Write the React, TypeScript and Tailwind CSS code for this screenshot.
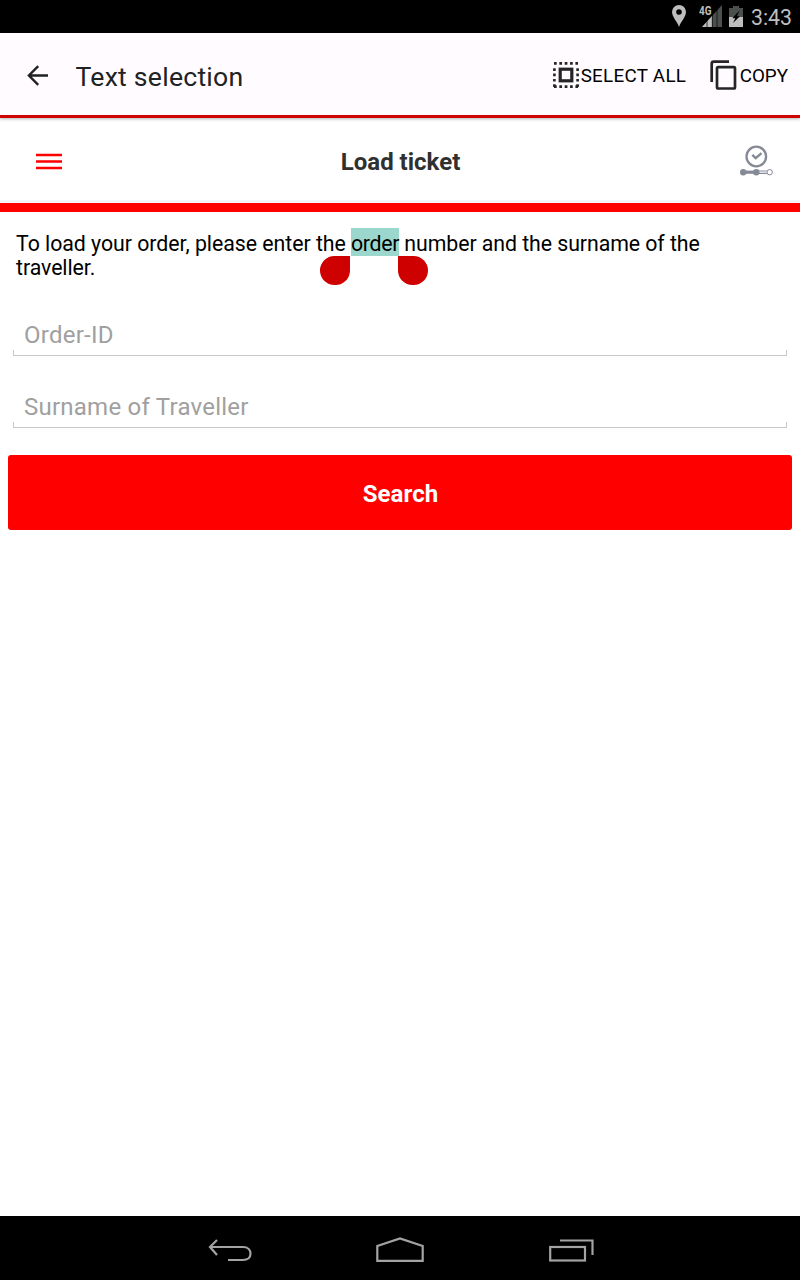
import React from "react";

function StatusBar() {
  return (
    <header className="flex h-[33px] items-center justify-end bg-black pr-2 text-[#bebebe]">
      <svg className="mb-[2px] mr-[13px] h-[22px] w-[14px]" viewBox="0 0 14 22" fill="currentColor">
        <path fillRule="evenodd" d="M7 0a7 7 0 0 0-7 7c0 5 5 9 7 15 2-6 7-10 7-15a7 7 0 0 0-7-7Zm0 4.2a2.8 2.8 0 1 1 0 5.6 2.8 2.8 0 0 1 0-5.6Z" />
      </svg>
      <svg className="mb-[2px] mr-[7px] h-[22px] w-[23px]" viewBox="0 0 23 22">
        <path d="M3 22 23 0v22Z" fill="#4b504d" />
        <path d="M3 22 13 11v11Z" fill="#bebebe" />
        <path d="M8 12v10M13.3 9v13M18 4v18" stroke="#000" strokeWidth="0.7" />
        <rect width="13" height="11" fill="#000" />
        <text x="0" y="10" textLength="12.5" lengthAdjust="spacingAndGlyphs" fontFamily="Roboto" fontWeight="700" fontSize="12" fill="#bebebe">4G</text>
      </svg>
      <svg className="mb-px mr-2 h-[21px] w-[14px]" viewBox="0 0 14 21">
        <path d="M4 0h6v2h4v9H0V2h4Z" fill="#4b504d" />
        <path d="M0 11h14v10H0Z" fill="#bebebe" />
        <path d="M10.5 4.5 3.3 12.2h3L4 17l7-6.8H8Z" fill="#000" />
      </svg>
      <span className="mt-[2px] text-[21.3px] leading-8">3:43</span>
    </header>
  );
}

function SelectionBar() {
  return (
    <div className="relative z-10 flex h-[85px] items-center border-b-[3px] border-[#cf0404] bg-[#fffbff] pl-[27px] pr-3 pt-[2px] shadow-[0_1px_3px_rgba(0,0,0,0.3)]">
      <svg className="mr-[27px] h-[21px] w-[21px]" viewBox="0 0 21 21" fill="none" stroke="#202224" strokeWidth="2.4">
        <path d="M21 10.5H2M11.2 1.2 1.9 10.5l9.3 9.3" />
      </svg>
      <h1 className="mt-[3px] pl-[0.5px] text-[26.6px] tracking-[0.24px] text-[#202224]">Text selection</h1>
      <button className="ml-auto flex items-center">
        <svg className="mr-[2px] h-[26px] w-[26px]" viewBox="0 0 26 26" fill="none" stroke="#252527">
          <path d="M1 1.4h24M1 24.6h24" strokeWidth="2.6" strokeDasharray="2.7 2.65" />
          <path d="M1.4 6.2v19M24.6 6.2v19" strokeWidth="2.6" strokeDasharray="2.7 2.65" />
          <rect x="7.2" y="7.2" width="11.6" height="11.6" strokeWidth="3.2" />
        </svg>
        <span className="mt-[2px] text-[18.8px] tracking-[0.3px] text-black">SELECT ALL</span>
      </button>
      <button className="ml-[23.5px] flex items-center">
        <svg className="mr-[3px] h-[30px] w-[27px]" viewBox="0 0 27 30" fill="none" stroke="#252527" strokeWidth="2.7">
          <path d="M19 1.7H3.8Q1.7 1.7 1.7 3.8V22" />
          <rect x="7" y="7.1" width="18" height="21.4" rx="1.2" />
        </svg>
        <span className="mt-[2px] text-[18.8px] text-black">COPY</span>
      </button>
    </div>
  );
}

function TicketBar() {
  return (
    <div className="h-[94px] border-b-[9px] border-[#ff0000]">
      <div className="grid h-[85px] grid-cols-[1fr_auto_1fr] items-center border-b-[3px] border-[#f3f3f8] pl-9 pr-[27px] pt-[3px]">
        <svg className="mt-px h-[17px] w-[26px]" viewBox="0 0 26 17" fill="none" stroke="#ff0000" strokeWidth="2.7">
          <path d="M0 2h26M0 8.5h26M0 15h26" />
        </svg>
        <h2 className="mr-2 mt-[2px] text-[24px] font-bold text-[#303030]">Load ticket</h2>
        <svg className="h-[32px] w-[33px] justify-self-end" viewBox="0 0 33 32" fill="none" stroke="#858a96">
          <circle cx="16.3" cy="11.5" r="9.8" strokeWidth="2.3" />
          <path d="m12.3 9.8 3.4 3.3 5.8-4.9" strokeWidth="2.4" />
          <path d="M3 27.2h14" strokeWidth="3.2" />
          <path d="M17 26h9.8M17 28.4h9.8" strokeWidth="1.2" />
          <circle cx="3.2" cy="27.2" r="3.2" fill="#858a96" stroke="none" />
          <circle cx="16.3" cy="27.2" r="3.2" fill="#858a96" stroke="none" />
          <circle cx="29.7" cy="27.2" r="2.7" fill="#fff" strokeWidth="1" />
        </svg>
      </div>
    </div>
  );
}

function Field({ label }: { label: string }) {
  return (
    <label className="mx-[13px] flex h-[72px] flex-col justify-end">
      <input
        aria-label={label}
        placeholder={label}
        className="h-[42px] w-full bg-transparent px-[11px] pt-[2px] text-[24px] tracking-[0.24px] outline-none placeholder:text-[#a0a0a0]"
      />
      <span className="-mt-[5px] block h-[6px] border-x border-b border-[#c8c8c8]" />
    </label>
  );
}

function NavigationBar() {
  return (
    <nav className="flex h-16 items-center justify-between bg-black pl-[208px] pr-[206px] pt-[3px] text-[#a3a3a3]">
      <svg className="h-[26px] w-[44px]" viewBox="0 0 44 26" fill="none" stroke="currentColor" strokeWidth="2.2">
        <path d="M9 3 2 10l7 8M2 10h33c5 0 7.5 3 7.5 6.7 0 3.5-2.5 6.3-7.5 6.3H20" />
      </svg>
      <svg className="mr-[2px] h-[26px] w-[48px]" viewBox="0 0 48 26" fill="none" stroke="currentColor" strokeWidth="2.2">
        <path d="M1.3 23.8V9L24 1.5 46.7 9v14.8Z" />
      </svg>
      <svg className="h-[26px] w-[45px]" viewBox="0 0 45 26" fill="none" stroke="currentColor" strokeWidth="2.2">
        <path d="M11 3.5h32.5V18" />
        <rect x="1.2" y="10" width="34.8" height="13.5" />
      </svg>
    </nav>
  );
}

export default function App() {
  return (
    <div className="flex h-[1280px] w-[800px] flex-col overflow-hidden bg-white font-['Roboto',sans-serif]">
      <StatusBar />
      <SelectionBar />
      <TicketBar />
      <main className="flex-1">
        <p className="h-[72px] px-4 pt-5 text-[21.3px] leading-6 tracking-[-0.03px] text-black">
          To load your order, please enter the{" "}
          <span className="relative bg-[#9bd7cd] pt-[3px] tracking-[-0.35px]">
            order
            <span className="absolute -left-[31px] top-full h-[29px] w-[30px] rounded-full rounded-tr-none bg-[#cf0000]" />
            <span className="absolute -right-[29px] top-full h-[29px] w-[30px] rounded-full rounded-tl-none bg-[#cf0000]" />
          </span>{" "}
          <span className="tracking-[-0.06px]">
            number and the surname of the
            <br />
            traveller.
          </span>
        </p>
        <Field label="Order-ID" />
        <Field label="Surname of Traveller" />
        <button className="mx-2 mt-[27px] flex h-[75px] w-[784px] items-center justify-center rounded-[3px] bg-[#ff0000] pl-px pt-[2px] text-[24px] font-bold tracking-[0.1px] text-white">
          Search
        </button>
      </main>
      <NavigationBar />
    </div>
  );
}
